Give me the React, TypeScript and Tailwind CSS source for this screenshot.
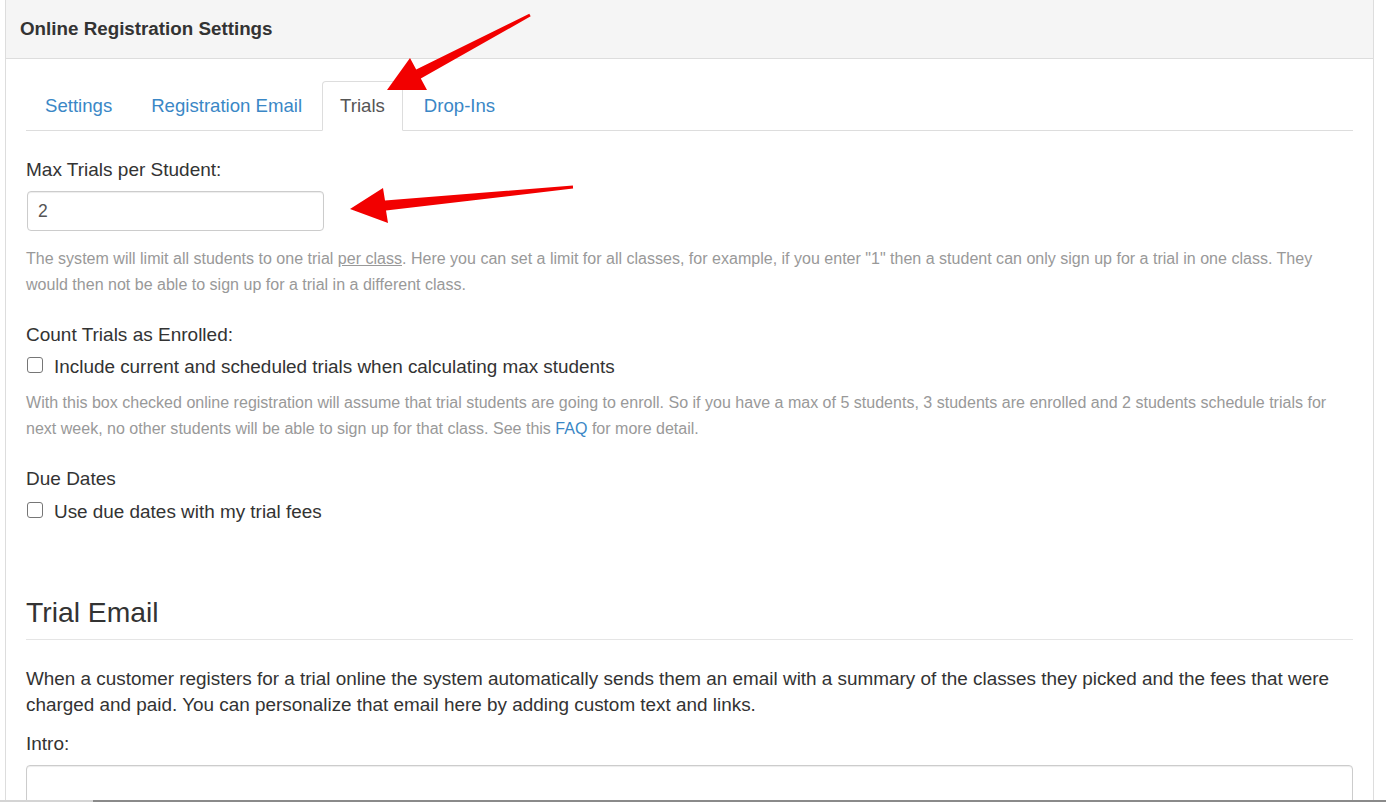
import React from "react";

function Checkbox() {
  return <span className="inline-block w-[16px] h-[16px] shrink-0 rounded-[3px] border border-[#767676] bg-white" />;
}

function Arrows() {
  return (
    <svg className="absolute inset-0 pointer-events-none" width="1386" height="802" viewBox="0 0 1386 802">
      <polygon
        fill="#f20000"
        points="529.3,13.7 416.2,69.6 410,58 387,90 427,90 420.8,78.4 530.7,16.3"
      />
      <polygon
        fill="#f20000"
        points="572.9,185.5 385,200.5 383,188 350,209 388,223 386,210.5 573.1,188.5"
      />
    </svg>
  );
}

export default function App() {
  const tabs = ["Settings", "Registration Email", "Trials", "Drop-Ins"];

  return (
    <div className="relative h-[802px] overflow-hidden bg-white text-[#333] font-['Liberation_Sans',Arial,sans-serif]">
      <div className="ml-[5px] w-[1369px] h-[802px] border-x border-[#ddd]">
        <div className="h-[59px] bg-[#f5f5f5] border-b border-[#ddd] flex items-center pl-[14px]">
          <h3 className="text-[18.8px] font-bold text-[#333]">Online Registration Settings</h3>
        </div>

        <div className="px-[20px]">
          <ul className="mt-[22px] flex border-b border-[#ddd] h-[50px]">
            {tabs.map((t) => {
              const active = t === "Trials";
              return (
                <li
                  key={t}
                  className={
                    active
                      ? "h-[50px] -mb-px mr-[2px] px-[17px] flex items-center rounded-t-[4px] border border-[#ddd] border-b-white bg-white text-[18.6px] text-[#555]"
                      : "h-[49px] mr-[1px] px-[19px] flex items-center text-[18.6px] text-[#3a87c6]"
                  }
                >
                  {t}
                </li>
              );
            })}
          </ul>

          <div className="mt-[26px] text-[19px] leading-[26px]">Max Trials per Student:</div>
          <div className="mt-[8px] ml-px w-[297px] h-[40px] rounded-[4px] border border-[#ccc] flex items-center px-[10px] text-[17.5px] text-[#555] shadow-[inset_0_1px_1px_rgba(0,0,0,0.075)]">
            2
          </div>
          <p className="mt-[14px] text-[16.05px] leading-[26px] text-[#999]">
            The system will limit all students to one trial <span className="underline">per class</span>. Here you can set a limit for all classes, for example, if you enter "1" then a student can only sign up for a trial in one class. They would then not be able to sign up for a trial in a different class.
          </p>

          <div className="mt-[25px] text-[19px] leading-[26px]">Count Trials as Enrolled:</div>
          <div className="mt-[6px] flex items-center gap-[11px] text-[18.9px] leading-[26px]">
            <span className="ml-px"><Checkbox /></span>
            <span>Include current and scheduled trials when calculating max students</span>
          </div>
          <p className="mt-[9px] text-[16.05px] leading-[26px] text-[#999]">
            With this box checked online registration will assume that trial students are going to enroll. So if you have a max of 5 students, 3 students are enrolled and 2 students schedule trials for next week, no other students will be able to sign up for that class. See this <span className="text-[#3a87c6]">FAQ</span> for more detail.
          </p>

          <div className="mt-[25px] text-[19px] leading-[26px]">Due Dates</div>
          <div className="mt-[7px] flex items-center gap-[11px] text-[18.9px] leading-[26px]">
            <span className="ml-px"><Checkbox /></span>
            <span>Use due dates with my trial fees</span>
          </div>

          <div className="mt-[71px] pb-[11px] border-b border-[#e5e5e5]">
            <h2 className="text-[28.3px] leading-[32px] text-[#333]">Trial Email</h2>
          </div>

          <p className="mt-[26px] text-[18.9px] leading-[26px]">
            When a customer registers for a trial online the system automatically sends them an email with a summary of the classes they picked and the fees that were charged and paid. You can personalize that email here by adding custom text and links.
          </p>
          <div className="mt-[13px] text-[19px] leading-[26px]">Intro:</div>
          <div className="mt-[8px] h-[80px] rounded-[4px] border border-[#ccc] shadow-[inset_0_1px_1px_rgba(0,0,0,0.075)]" />
        </div>
      </div>

      <div className="absolute left-0 bottom-0 w-[93px] h-[2px] bg-[#d4d4d4]" />
      <div className="absolute left-[93px] right-0 bottom-0 h-[2px] bg-[#8a8a8a]" />
      <Arrows />
    </div>
  );
}
